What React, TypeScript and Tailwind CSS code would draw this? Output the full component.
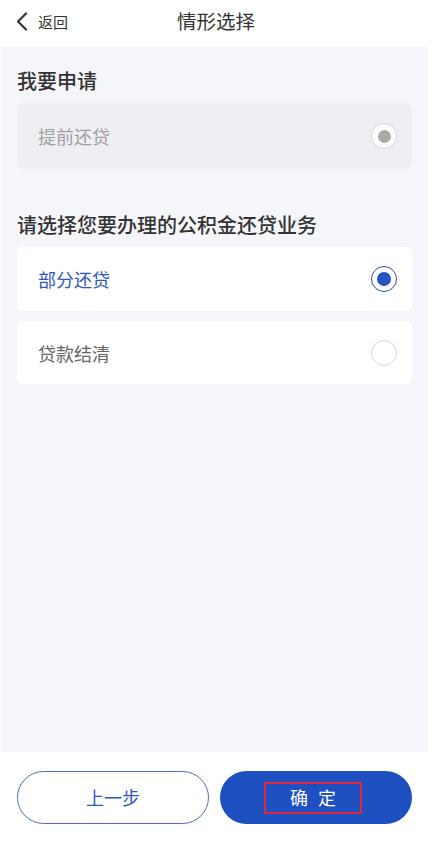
import React from 'react';

type Option = { label: string; state: 'disabled' | 'selected' | 'idle' };

const Radio: React.FC<{ state: Option['state'] }> = ({ state }) => {
  if (state === 'selected') {
    return (
      <div className="w-[26px] h-[26px] rounded-full border-[1.5px] border-[#2552c4] flex items-center justify-center bg-white">
        <div className="w-[14px] h-[14px] rounded-full bg-[#2552c4]"></div>
      </div>
    );
  }
  if (state === 'disabled') {
    return (
      <div className="w-[26px] h-[26px] rounded-full border-[1.5px] border-[#d6d6d6] flex items-center justify-center bg-white">
        <div className="w-[13px] h-[13px] rounded-full bg-[#a9a9a9]"></div>
      </div>
    );
  }
  return <div className="w-[26px] h-[26px] rounded-full border-[1.5px] border-[#d4d4d4] bg-white"></div>;
};

const OptionCard: React.FC<{ option: Option; height: string }> = ({ option, height }) => {
  const bg = option.state === 'disabled' ? 'bg-[#eeeff2]' : 'bg-white';
  const color =
    option.state === 'selected' ? 'text-[#2b58ba]' : option.state === 'disabled' ? 'text-[#a0a0a0]' : 'text-[#666666]';
  return (
    <div className={`${bg} ${height} rounded-[6px] flex items-center justify-between pl-[21px] pr-[15px]`}>
      <span className={`${color} text-[18px] leading-none`}>{option.label}</span>
      <Radio state={option.state} />
    </div>
  );
};

export default function App() {
  return (
    <div
      className="w-[432px] h-[850px] bg-white flex flex-col overflow-hidden"
      style={{ fontFamily: '"Noto Sans CJK SC", "Noto Sans", sans-serif' }}
    >
      {/* header */}
      <div className="h-[47px] shrink-0 relative flex items-center justify-center">
        <div className="absolute left-[15px] top-0 h-[42px] flex items-center gap-[9px]">
          <svg width="14" height="19" viewBox="0 0 14 19" fill="none">
            <polyline points="11,1.5 3,9.5 11,17.5" stroke="#333" strokeWidth="2.2" strokeLinecap="round" strokeLinejoin="round" />
          </svg>
          <span className="text-[15px] text-[#333] leading-none">返回</span>
        </div>
        <span className="text-[19.5px] text-[#333] leading-none -mt-[5px]">情形选择</span>
      </div>

      {/* content */}
      <div className="flex-1 bg-[#f5f6fa] ml-px mr-[4px] px-[16px] pt-[20px]">
        <h2 className="text-[20px] leading-[28px] text-[#333] font-medium">我要申请</h2>
        <div className="mt-[8px]">
          <OptionCard option={{ label: '提前还贷', state: 'disabled' }} height="h-[66px]" />
        </div>

        <h2 className="mt-[42px] text-[20px] leading-[28px] text-[#333] font-medium">请选择您要办理的公积金还贷业务</h2>
        <div className="mt-[8px] flex flex-col gap-[10px]">
          <OptionCard option={{ label: '部分还贷', state: 'selected' }} height="h-[64px]" />
          <OptionCard option={{ label: '贷款结清', state: 'idle' }} height="h-[63px]" />
        </div>
      </div>

      {/* footer */}
      <div className="h-[98px] shrink-0 bg-white flex gap-[11px] pl-[17px] pr-[20px] pt-[19px]">
        <button className="w-[192px] h-[53px] rounded-full border border-[#4d6fbf] text-[#2b58ba] text-[18px] flex items-center justify-center">
          上一步
        </button>
        <button className="w-[192px] h-[53px] rounded-full bg-[#1f50c2] text-white text-[18px] flex items-center justify-center">
          <span className="w-[98px] h-[32px] border-2 border-[#e0283a] flex items-center justify-center tracking-[10px] pl-[10px] -ml-[6px]">
            确定
          </span>
        </button>
      </div>
    </div>
  );
}
